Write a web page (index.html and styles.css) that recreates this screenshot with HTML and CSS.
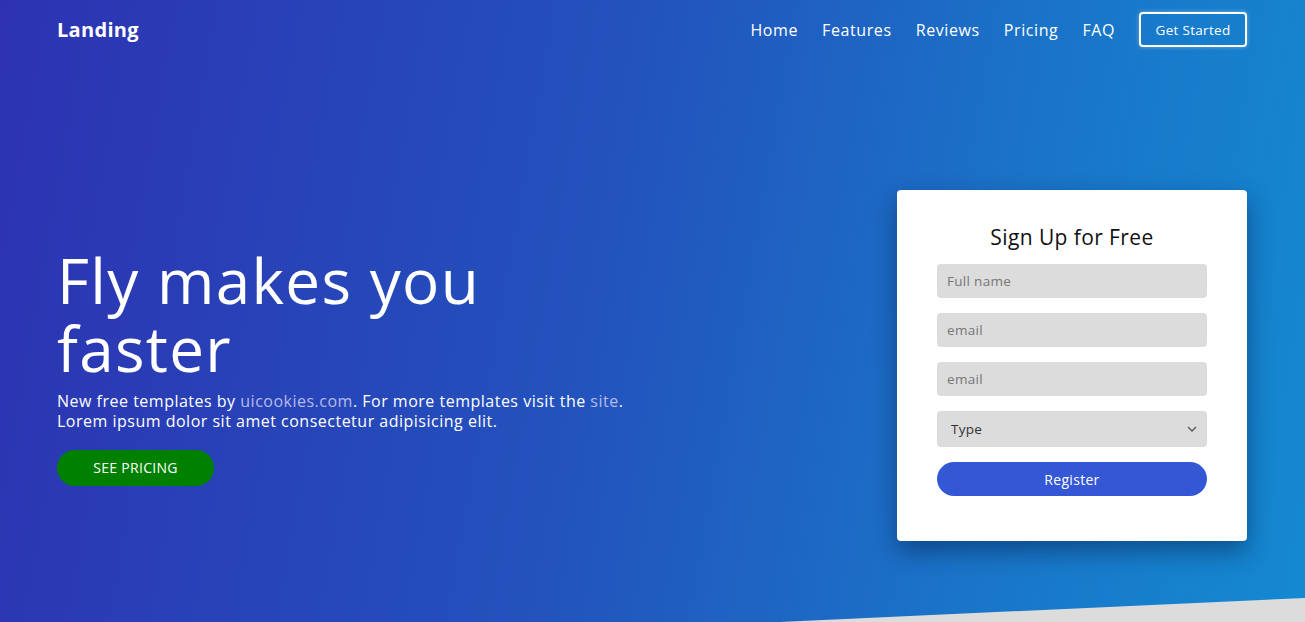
FILE: index.html
```html
<!DOCTYPE html>
<html lang="en">
<head>
<meta charset="utf-8">
<title>Landing</title>
<link rel="stylesheet" href="styles.css">
</head>
<body>
<div class="hero">
  <header class="nav">
    <a class="brand" href="#">Landing</a>
    <nav class="menu">
      <a href="#">Home</a>
      <a href="#">Features</a>
      <a href="#">Reviews</a>
      <a href="#">Pricing</a>
      <a href="#">FAQ</a>
      <a class="btn-outline" href="#">Get Started</a>
    </nav>
  </header>
  <main class="main">
    <section class="intro">
      <h1>Fly makes you faster</h1>
      <p>New free templates by <a href="#">uicookies.com</a>. For more templates visit the <a href="#">site</a>. Lorem ipsum dolor sit amet consectetur adipisicing elit.</p>
      <a class="btn-green" href="#">SEE PRICING</a>
    </section>
    <form class="card">
      <h2>Sign Up for Free</h2>
      <input class="field" type="text" placeholder="Full name">
      <input class="field" type="text" placeholder="email">
      <input class="field" type="text" placeholder="email">
      <div class="select">
        <span>Type</span>
        <svg width="10" height="6" viewBox="0 0 10 6"><path d="M1 1l4 4 4-4" fill="none" stroke="#555" stroke-width="1.3"/></svg>
      </div>
      <button class="btn-blue" type="button">Register</button>
    </form>
  </main>
  <div class="slope"></div>
</div>
</body>
</html>
```

FILE: styles.css
```css
* { box-sizing: border-box; }
html, body { margin: 0; padding: 0; }
body {
  font-family: "Open Sans", "Noto Sans", sans-serif;
  color: #fff;
  overflow: hidden;
}
a { color: inherit; text-decoration: none; }
.hero {
  position: relative;
  height: 622px;
  background: linear-gradient(100deg, #2d32b2 0%, #2352bd 45%, #1a74c8 75%, #1489d1 100%);
  overflow: hidden;
}
.nav {
  display: flex;
  align-items: center;
  justify-content: space-between;
  padding: 12px 58px 0 57px;
  height: 47px;
}
.brand {
  font-size: 20px;
  font-weight: 700;
  letter-spacing: 0.3px;
}
.menu {
  display: flex;
  align-items: center;
  gap: 24px;
  font-size: 16px;
  letter-spacing: 0.6px;
}
.btn-outline {
  display: flex;
  align-items: center;
  justify-content: center;
  width: 108px;
  height: 35px;
  border: 2px solid #fff;
  border-radius: 4px;
  font-size: 13.5px;
  letter-spacing: 0.3px;
  box-shadow: 0 0 4px rgba(255,255,255,0.4);
}
.main {
  display: flex;
  justify-content: space-between;
  align-items: center;
  padding: 143px 58px 0 57px;
}
.intro { width: 600px; }
.intro h1 {
  margin: 0;
  font-size: 62px;
  font-weight: 500;
  line-height: 68px;
  width: 480px;
  letter-spacing: 1.3px;
}
.intro p {
  margin: 9px 0 19px;
  font-size: 16px;
  line-height: 20px;
  letter-spacing: 0.5px;
}
.intro p a { color: #b6bbea; }
.btn-green {
  display: inline-flex;
  align-items: center;
  justify-content: center;
  width: 157px;
  height: 36px;
  border-radius: 18px;
  background: #008000;
  font-size: 14px;
  letter-spacing: 0.3px;
}
.card {
  width: 350px;
  background: #fff;
  border-radius: 4px;
  padding: 33px 40px 45px;
  display: flex;
  flex-direction: column;
  gap: 15px;
  box-shadow: 0 10px 25px rgba(0, 20, 60, 0.45);
}
.card h2 {
  margin: 0 0 -2px;
  color: #111;
  font-size: 21px;
  line-height: 28px;
  font-weight: 400;
  text-align: center;
  letter-spacing: 0.4px;
}
.field {
  height: 34px;
  border: 0;
  border-radius: 4px;
  background: #dcdcdc;
  padding: 0 10px;
  font-family: inherit;
  font-size: 13.5px;
  letter-spacing: 0.3px;
  color: #333;
}
.field::placeholder { color: #777; }
.select {
  height: 36px;
  border-radius: 4px;
  background: #dcdcdc;
  display: flex;
  align-items: center;
  justify-content: space-between;
  padding: 0 10px 0 14px;
  font-size: 13.5px;
  letter-spacing: 0.3px;
  color: #333;
}
.btn-blue {
  height: 34px;
  border: 0;
  border-radius: 17px;
  background: #3457d5;
  color: #fff;
  font-family: inherit;
  font-size: 14px;
  letter-spacing: 0.3px;
}
.slope {
  position: absolute;
  right: 0;
  bottom: 0;
  width: 525px;
  height: 24px;
  background: #dcdcdc;
  clip-path: polygon(0 100%, 100% 0, 100% 100%);
}
```
